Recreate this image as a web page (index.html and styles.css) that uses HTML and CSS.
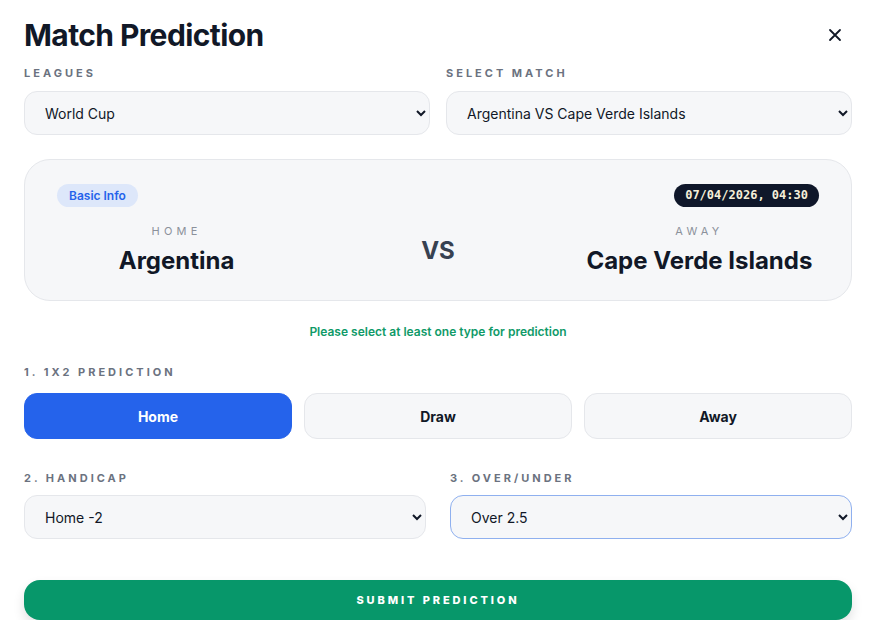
FILE: index.html
```html
<!DOCTYPE html>
<html lang="en">
<head>
  <meta charset="UTF-8" />
  <title>Match Prediction</title>
  <link rel="stylesheet" href="styles.css">
</head>
<body>
  <div class="modal">
    <div class="modal-head">
      <h1>Match Prediction</h1>
      <button class="close" type="button" aria-label="Close">
        <svg width="14" height="14" viewBox="0 0 14 14" fill="none" stroke="#111827" stroke-width="1.8" stroke-linecap="round">
          <path d="M2 2 L12 12 M12 2 L2 12"/>
        </svg>
      </button>
    </div>

    <div class="row two">
      <div>
        <label class="field-label">Leagues</label>
        <select class="field">
          <option>World Cup</option>
        </select>
      </div>
      <div>
        <label class="field-label">Select Match</label>
        <select class="field">
          <option>Argentina VS Cape Verde Islands</option>
        </select>
      </div>
    </div>

    <div class="match-card">
      <div class="badges">
        <span class="badge-info">Basic Info</span>
        <span class="badge-date">07/04/2026, 04:30</span>
      </div>
      <div class="teams">
        <div class="team">
          <div class="side">Home</div>
          <div class="team-name">Argentina</div>
        </div>
        <div class="vs">VS</div>
        <div class="team">
          <div class="side">Away</div>
          <div class="team-name">Cape Verde Islands</div>
        </div>
      </div>
    </div>

    <p class="hint">Please select at least one type for prediction</p>

    <label class="field-label section">1. 1X2 Prediction</label>
    <div class="choices">
      <button type="button" class="choice active">Home</button>
      <button type="button" class="choice">Draw</button>
      <button type="button" class="choice">Away</button>
    </div>

    <div class="row wide">
      <div>
        <label class="field-label">2. Handicap</label>
        <select class="field">
          <option>Home -2</option>
        </select>
      </div>
      <div>
        <label class="field-label">3. Over/Under</label>
        <select class="field focused">
          <option>Over 2.5</option>
        </select>
      </div>
    </div>

    <button type="button" class="submit">Submit Prediction</button>
  </div>
</body>
</html>
```

FILE: styles.css
```css
body {
  margin: 0;
  background: #fff;
  font-family: Inter, "Noto Sans", sans-serif;
  color: #111827;
}
.modal {
  padding: 16px 17px 0 24px;
}
.modal-head {
  display: flex;
  justify-content: space-between;
  align-items: center;
  height: 38px;
}
h1 {
  margin: 0;
  font-size: 30px;
  line-height: 38px;
  font-weight: 700;
  letter-spacing: -0.6px;
  color: #111827;
}
.close {
  background: none;
  border: none;
  padding: 0;
  width: 18px;
  height: 18px;
  display: flex;
  align-items: center;
  justify-content: center;
  margin-right: 8px;
  cursor: pointer;
}
.row {
  display: grid;
  grid-template-columns: 1fr 1fr;
  column-gap: 16px;
  margin-top: 11px;
  width: 828px;
}
.row.wide {
  column-gap: 24px;
  margin-top: 31px;
}
.field-label {
  display: block;
  font-size: 11px;
  line-height: 16px;
  font-weight: 700;
  letter-spacing: 3px;
  text-transform: uppercase;
  color: #6b7280;
  margin-bottom: 10px;
}
.row.wide .field-label {
  margin-bottom: 9px;
}
.field {
  display: block;
  width: 100%;
  height: 44px;
  padding: 0 12px 0 16px;
  font-family: Inter, "Noto Sans", sans-serif;
  font-size: 14px;
  color: #111827;
  background: #f6f7f9;
  border: 1px solid #e5e7eb;
  border-radius: 13px;
}
.field.focused {
  border-color: #8fb0ef;
}
.match-card {
  width: 828px;
  box-sizing: border-box;
  margin-top: 24px;
  padding: 24px 32px 23px;
  background: #f6f7f9;
  border: 1px solid #e5e7eb;
  border-radius: 26px;
}
.badges {
  display: flex;
  justify-content: space-between;
  align-items: center;
}
.badge-info {
  background: #dde7fa;
  color: #2563eb;
  font-size: 12px;
  font-weight: 600;
  line-height: 15px;
  padding: 4px 12px;
  border-radius: 999px;
}
.badge-date {
  background: #0f172a;
  color: #f6efd9;
  font-family: "DejaVu Sans Mono", "Liberation Mono", monospace;
  font-size: 12px;
  font-weight: 700;
  line-height: 15px;
  padding: 4px 11px;
  border-radius: 999px;
}
.teams {
  display: grid;
  grid-template-columns: 1fr auto 1fr;
  column-gap: 125px;
  align-items: center;
  margin-top: 16px;
}
.team {
  text-align: center;
}
.side {
  font-size: 11px;
  line-height: 16px;
  letter-spacing: 4.2px;
  text-transform: uppercase;
  color: #8b919b;
}
.team-name {
  margin-top: 6px;
  font-size: 24px;
  line-height: 32px;
  font-weight: 700;
  color: #111827;
}
.vs {
  font-size: 24px;
  font-weight: 700;
  color: #374151;
}
.hint {
  width: 828px;
  margin: 23px 0 0;
  text-align: center;
  font-size: 12px;
  line-height: 16px;
  font-weight: 600;
  color: #0f9a68;
}
.field-label.section {
  margin-top: 24px;
  margin-bottom: 13px;
}
.choices {
  display: grid;
  grid-template-columns: repeat(3, 1fr);
  gap: 12px;
  width: 828px;
}
.choice {
  height: 46px;
  font-family: Inter, "Noto Sans", sans-serif;
  font-size: 14px;
  font-weight: 700;
  color: #111827;
  background: #f6f7f9;
  border: 1px solid #e5e7eb;
  border-radius: 13px;
  cursor: pointer;
}
.choice.active {
  background: #2563eb;
  border-color: #2563eb;
  color: #fff;
}
.submit {
  display: block;
  width: 828px;
  height: 40px;
  margin-top: 41px;
  background: #07976a;
  color: #fff;
  border: none;
  border-radius: 16px;
  font-family: Inter, "Noto Sans", sans-serif;
  font-size: 11px;
  font-weight: 800;
  letter-spacing: 2.9px;
  text-transform: uppercase;
  box-shadow: 0 6px 12px rgba(0,0,0,0.12);
  cursor: pointer;
}
```
